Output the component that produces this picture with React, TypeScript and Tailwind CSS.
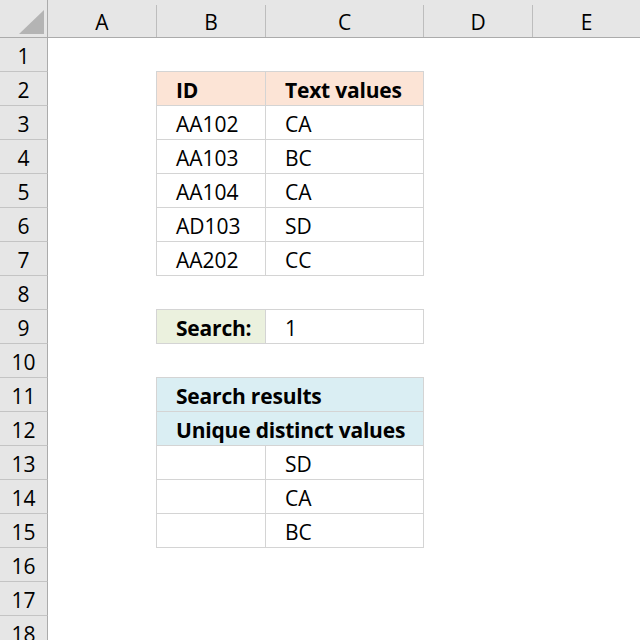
import React from "react";

const cols = [
  { l: "A", w: 109 },
  { l: "B", w: 109 },
  { l: "C", w: 158 },
  { l: "D", w: 109 },
  { l: "E", w: 108 },
];

type CellSpec = { text?: string; bold?: boolean; bg?: string; span?: number };

const rowsData: Record<number, CellSpec[]> = {
  2: [
    { text: "ID", bold: true, bg: "bg-[#fce4d6]" },
    { text: "Text values", bold: true, bg: "bg-[#fce4d6]" },
  ],
  3: [{ text: "AA102" }, { text: "CA" }],
  4: [{ text: "AA103" }, { text: "BC" }],
  5: [{ text: "AA104" }, { text: "CA" }],
  6: [{ text: "AD103" }, { text: "SD" }],
  7: [{ text: "AA202" }, { text: "CC" }],
  9: [
    { text: "Search:", bold: true, bg: "bg-[#ebf1de]" },
    { text: "1" },
  ],
  11: [{ text: "Search results", bold: true, bg: "bg-[#daeef3]", span: 2 }],
  12: [{ text: "Unique distinct values", bold: true, bg: "bg-[#daeef3]", span: 2 }],
  13: [{}, { text: "SD" }],
  14: [{}, { text: "CA" }],
  15: [{}, { text: "BC" }],
};

const topRows = new Set([2, 9, 11]);

export default function App() {
  const rows = Array.from({ length: 18 }, (_, i) => i + 1);
  return (
    <div
      className="w-[640px] h-[640px] overflow-hidden bg-white text-black text-[21px]"
      style={{ fontFamily: "'Open Sans', Lato, sans-serif" }}
    >
      {/* column header */}
      <div className="flex h-[38px] bg-[#e6e6e6] border-b border-[#ababab]">
        <div className="w-[48px] shrink-0 border-r border-[#ababab]">
          <svg width="47" height="37" className="block">
            <polygon points="44,10 44,34 19,34" fill="#b4b4b4" />
          </svg>
        </div>
        {cols.map((c) => (
          <div key={c.l} className="shrink-0 flex flex-col" style={{ width: c.w }}>
            <div className="h-[5px]" />
            <div className="flex-1 flex items-center justify-center pt-[2px] border-r border-[#bdbdbd] leading-none">
              {c.l}
            </div>
          </div>
        ))}
      </div>
      {rows.map((r) => {
        const data = rowsData[r];
        const isTop = topRows.has(r);
        return (
          <div key={r} className="flex h-[34px]">
            <div className="w-[48px] shrink-0 bg-[#e6e6e6] border-r border-[#ababab] border-b border-b-[#c4c4c4] flex items-center justify-center pt-[3px] leading-none">
              {r}
            </div>
            <div className="w-[108px] shrink-0" />
            {data
              ? data.map((c, i) => {
                  const w = c.span === 2 ? 268 : i === 0 ? 110 : 158;
                  return (
                    <div
                      key={i}
                      className={`shrink-0 flex items-center pt-[3px] leading-none whitespace-nowrap border-b border-r border-[#d4d4d4] ${
                        i === 0 ? "border-l pl-[19px]" : "pl-[19px]"
                      } ${isTop ? "border-t -mt-px h-[35px]" : ""} ${c.bold ? "font-bold tracking-[-0.2px]" : ""} ${
                        c.bg ?? "bg-white"
                      }`}
                      style={{ width: w }}
                    >
                      {c.text}
                    </div>
                  );
                })
              : null}
          </div>
        );
      })}
    </div>
  );
}
